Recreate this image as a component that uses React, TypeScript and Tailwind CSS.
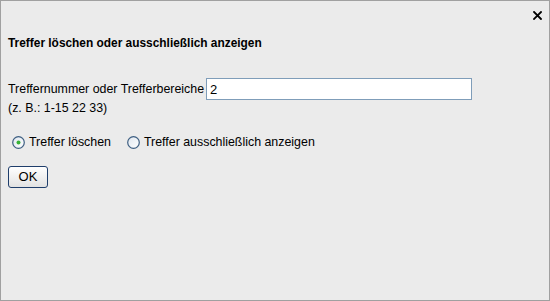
function Radio({ checked }: { checked?: boolean }) {
  return (
    <svg width="13" height="13" viewBox="0 0 13 13" className="shrink-0">
      <defs>
        <linearGradient id={checked ? 'rg1' : 'rg2'} x1="0" y1="0" x2="1" y2="1">
          <stop offset="0" stopColor="#dfe6ee" />
          <stop offset="1" stopColor="#ffffff" />
        </linearGradient>
      </defs>
      <circle cx="6.5" cy="6.5" r="5.8" fill={`url(#${checked ? 'rg1' : 'rg2'})`} stroke="#3e5f82" strokeWidth="1.2" />
      {checked && <circle cx="6.5" cy="6.5" r="2" fill="#38b238" />}
    </svg>
  );
}

export default function App() {
  return (
    <div
      className="w-[550px] h-[301px] border border-[#a0a0a0] bg-[#ebebeb] text-[12.4px] leading-[14px] text-black"
      style={{ fontFamily: '"Liberation Sans", Arial, sans-serif' }}
    >
      <div className="flex justify-end pt-[10px] pr-[7px]">
        <svg width="9" height="9" viewBox="0 0 9 9">
          <path d="M1 1 L8 8 M8 1 L1 8" stroke="#000" strokeWidth="1.8" strokeLinecap="square" />
        </svg>
      </div>
      <div className="pl-[7px] pt-[16px]">
        <h1 className="font-bold text-[11.9px] leading-[14px]">Treffer löschen oder ausschließlich anzeigen</h1>

        <div className="flex items-center mt-[28px]">
          <span>Treffernummer oder Trefferbereiche</span>
          <input
            defaultValue="2"
            className="ml-[2px] w-[266px] h-[22px] border border-[#7f9db9] bg-white px-[3px] text-[13px] outline-none"
            style={{ fontFamily: '"Liberation Sans", Arial, sans-serif' }}
          />
        </div>
        <div className="mt-[1px]">(z. B.: 1-15 22 33)</div>

        <div className="flex items-center mt-[20px] pl-[4px]">
          <label className="flex items-center gap-[4px]">
            <Radio checked />
            <span>Treffer löschen</span>
          </label>
          <label className="flex items-center gap-[4px] ml-[16px]">
            <Radio />
            <span>Treffer ausschließlich anzeigen</span>
          </label>
        </div>

        <button
          className="mt-[17px] w-[40px] h-[22px] rounded-[3px] border border-[#1f3e6b] bg-gradient-to-b from-white to-[#e2e2e2] text-[13px] leading-[14px]"
          style={{ fontFamily: '"Liberation Sans", Arial, sans-serif' }}
        >
          OK
        </button>
      </div>
    </div>
  );
}
